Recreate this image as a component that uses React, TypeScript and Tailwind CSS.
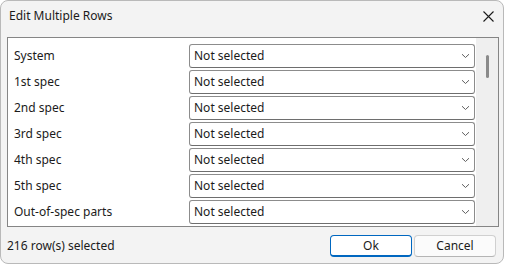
import React from "react";

const rows = [
  "System",
  "1st spec",
  "2nd spec",
  "3rd spec",
  "4th spec",
  "5th spec",
  "Out-of-spec parts",
  "",
];

function Chevron() {
  return (
    <svg width="9" height="6" viewBox="0 0 9 6" className="shrink-0">
      <path d="M1 1.2 L4.5 4.5 L8 1.2" fill="none" stroke="#5f5f5f" strokeWidth="1" />
    </svg>
  );
}

export default function App() {
  return (
    <div
      className="w-[505px] h-[265px] bg-white text-[12px] text-[#1b1b1b]"
      style={{ fontFamily: '"Segoe UI", "Noto Sans", sans-serif' }}
    >
      <div className="w-[504px] h-[264px] rounded-[8px] border border-[#b9b9b9] bg-[#f3f3f3] flex flex-col overflow-hidden">
        <div className="h-[36px] flex items-start justify-between shrink-0">
          <span className="pl-[8px] pt-[6px] leading-[18px]">Edit Multiple Rows</span>
          <svg width="11" height="11" viewBox="0 0 11 11" className="mt-[10px] mr-[9px]">
            <path d="M0.5 0.5 L10.5 10.5 M10.5 0.5 L0.5 10.5" stroke="#1b1b1b" strokeWidth="1.1" />
          </svg>
        </div>
        <div className="ml-[6px] w-[492px] h-[190px] border border-[#858585] bg-white flex shrink-0">
          <div className="flex-1 overflow-hidden pt-[6px] pl-[6px] pr-[1px] flex flex-col gap-[2px]">
            {rows.map((r, i) => (
              <div key={i} className="flex items-center h-[24px] shrink-0">
                <span className="w-[175px] shrink-0">{r}</span>
                <div className="flex-1 h-[24px] border border-[#8c8c8c] border-b-[#6e6e6e] rounded-[3px] bg-white flex items-center justify-between pl-[4px] pr-[4px]">
                  <span>Not selected</span>
                  <Chevron />
                </div>
              </div>
            ))}
          </div>
          <div className="w-[22px] shrink-0 bg-[#efefef] flex justify-center pt-[17px]">
            <div className="w-[3px] h-[23px] rounded-full bg-[#8a8a8a]" />
          </div>
        </div>
        <div className="flex-1 flex items-center justify-between pl-[6px] pr-[7px]">
          <span className="pt-[1px]">216 row(s) selected</span>
          <div className="flex gap-[2px] pt-[2px]">
            <button className="w-[82px] h-[22px] rounded-[4px] border border-[#0067c0] border-b-2 bg-white flex items-center justify-center">
              Ok
            </button>
            <button className="w-[82px] h-[22px] rounded-[4px] border border-[#d0d0d0] border-b-[#b5b5b5] bg-[#fbfbfb] flex items-center justify-center">
              Cancel
            </button>
          </div>
        </div>
      </div>
    </div>
  );
}
